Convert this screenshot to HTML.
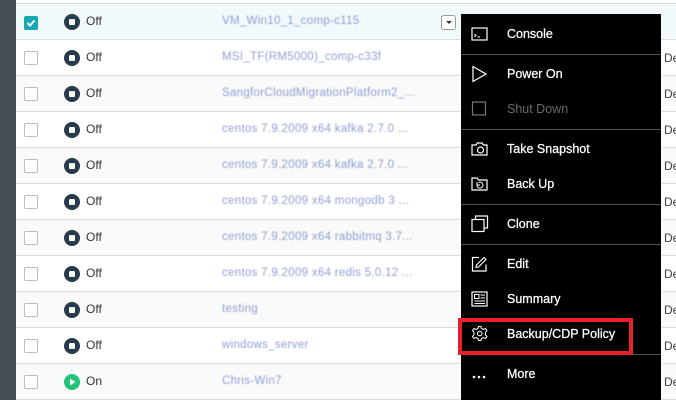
<!DOCTYPE html>
<html><head><meta charset="utf-8"><style>
*{margin:0;padding:0;box-sizing:border-box}
body{width:676px;height:400px;overflow:hidden;background:#fff;font-family:"Liberation Sans",sans-serif;position:relative}
.side{position:absolute;left:0;top:0;width:16px;height:400px;background:#464e56}
.top{position:absolute;left:16px;top:0;width:660px;height:4px;background:#fff;border-bottom:1px solid #ddd}
.row{position:absolute;left:16px;width:660px;height:36px;border-bottom:1px solid #dcdcdc;background:#fff}
.row.alt{background:#fafafa}
.row.sel{background:#f2f9fc}
.cb{position:absolute;left:8px;top:11px;width:14px;height:14px;border:1px solid #bdbdbd;border-radius:2px;background:#fff}
.cb.on{background:#16aab0;border-color:#16aab0}
.st{position:absolute;left:48px;top:10px;width:16px;height:16px;border-radius:50%;background:#263c48}
.st::after{content:"";position:absolute;left:5px;top:5px;width:6px;height:6px;background:#fff;border-radius:1px}
.st.g{background:#22c27a}
.st.g::after{display:none}
.lbl{position:absolute;left:70px;top:10px;font-size:12px;color:#333}
.nm{position:absolute;left:206px;top:11px;font-size:11.5px;color:#6b7fc4;opacity:.75;letter-spacing:.3px;filter:blur(.5px)}
.de{position:absolute;left:648px;top:11px;font-size:12px;color:#444}
.dd{position:absolute;left:441px;top:15px;width:15px;height:15px;border:1px solid #999;border-radius:3px;background:#fff}
.dd::after{content:"";position:absolute;left:4px;top:5px;border-left:3px solid transparent;border-right:3px solid transparent;border-top:3px solid #333}
.menu{position:absolute;left:461px;top:14px;width:200px;height:386px;background:#000}
.it{position:absolute;left:0;width:200px;height:35px;color:#fff;font-size:12.5px;-webkit-text-stroke:0.25px #fff}
.it span{position:absolute;left:46px;top:11px}
.it svg{position:absolute;left:10px;top:9px}
.dis{color:#6a6a6a;-webkit-text-stroke:0}
.sep{position:absolute;left:0;width:200px;height:1px;background:#4f5358}
.red{position:absolute;left:458px;top:318px;width:175px;height:37px;border:4px solid #e8202a}
</style></head><body>
<div class="side"></div>
<div class="top"></div>

<div class="row sel" style="top:5px;height:35px"><div class="cb on"><svg width="12" height="12" viewBox="0 0 12 12" style="position:absolute;left:0;top:0"><path d="M2.5 6 L5 8.5 L9.5 3.5" stroke="#fff" stroke-width="2" fill="none"/></svg></div><div class="st" style="top:9px"></div><div class="lbl" style="top:9px">Off</div><div class="nm" style="top:10px">VM_Win10_1_comp-c115</div></div>
<div class="row" style="top:40px"><div class="cb"></div><div class="st"></div><div class="lbl">Off</div><div class="nm">MSI_TF(RM5000)_comp-c33f</div><div class="de">De</div></div>
<div class="row alt" style="top:76px"><div class="cb"></div><div class="st"></div><div class="lbl">Off</div><div class="nm">SangforCloudMigrationPlatform2_...</div><div class="de">De</div></div>
<div class="row" style="top:112px"><div class="cb"></div><div class="st"></div><div class="lbl">Off</div><div class="nm">centos 7.9.2009 x64 kafka 2.7.0 ...</div><div class="de">De</div></div>
<div class="row alt" style="top:148px"><div class="cb"></div><div class="st"></div><div class="lbl">Off</div><div class="nm">centos 7.9.2009 x64 kafka 2.7.0 ...</div><div class="de">De</div></div>
<div class="row" style="top:184px"><div class="cb"></div><div class="st"></div><div class="lbl">Off</div><div class="nm">centos 7.9.2009 x64 mongodb 3 ...</div><div class="de">De</div></div>
<div class="row alt" style="top:220px"><div class="cb"></div><div class="st"></div><div class="lbl">Off</div><div class="nm">centos 7.9.2009 x64 rabbitmq 3.7...</div><div class="de">De</div></div>
<div class="row" style="top:256px"><div class="cb"></div><div class="st"></div><div class="lbl">Off</div><div class="nm">centos 7.9.2009 x64 redis 5.0.12 ...</div><div class="de">De</div></div>
<div class="row alt" style="top:292px"><div class="cb"></div><div class="st"></div><div class="lbl">Off</div><div class="nm">testing</div><div class="de">De</div></div>
<div class="row" style="top:328px"><div class="cb"></div><div class="st"></div><div class="lbl">Off</div><div class="nm">windows_server</div><div class="de">De</div></div>
<div class="row alt" style="top:364px"><div class="cb"></div><div class="st g"><svg width="16" height="16" viewBox="0 0 16 16"><path d="M6 4.5 L11.5 8 L6 11.5 Z" fill="#fff"/></svg></div><div class="lbl">On</div><div class="nm">Chris-Win7</div><div class="de">De</div></div>

<div class="dd"></div>

<div class="menu">
 <div class="it" style="top:2px"><svg width="18" height="18" viewBox="0 0 18 18"><rect x="1" y="3" width="15" height="12" stroke="#fff" fill="none" stroke-width="1.2"/><path d="M3.5 9 L5 10.5 L3.5 12 M6.5 12 H9" stroke="#fff" fill="none" stroke-width="1"/></svg><span>Console</span></div>
 <div class="sep" style="top:40px"></div>
 <div class="it" style="top:42px"><svg width="18" height="18" viewBox="0 0 18 18"><path d="M2 1.5 L15 9 L2 16.5 Z" stroke="#fff" fill="none" stroke-width="1.2"/></svg><span>Power On</span></div>
 <div class="it dis" style="top:77px"><svg width="18" height="18" viewBox="0 0 18 18"><rect x="1.5" y="2" width="13" height="13" stroke="#777" fill="none" stroke-width="1.2"/></svg><span>Shut Down</span></div>
 <div class="sep" style="top:115px"></div>
 <div class="it" style="top:117px"><svg width="18" height="18" viewBox="0 0 18 18"><path d="M1 5 H5 L6.5 3 H11 L12.5 5 H16 V15 H1 Z" stroke="#fff" fill="none" stroke-width="1.2"/><circle cx="9.5" cy="10" r="3" stroke="#fff" fill="none" stroke-width="1.2"/></svg><span>Take Snapshot</span></div>
 <div class="it" style="top:152px"><svg width="18" height="18" viewBox="0 0 18 18"><path d="M1 3 H6 L7.5 5 H16 V15 H1 Z" stroke="#fff" fill="none" stroke-width="1.2"/><path d="M6 10 A3 3 0 1 0 7.5 7.5 M6 7 V10 H9" stroke="#fff" fill="none" stroke-width="1"/></svg><span>Back Up</span></div>
 <div class="sep" style="top:190px"></div>
 <div class="it" style="top:192px"><svg width="18" height="18" viewBox="0 0 18 18"><rect x="4.5" y="1" width="12" height="12" stroke="#fff" fill="none" stroke-width="1.2"/><rect x="1" y="4.5" width="12" height="12" stroke="#fff" fill="#000" stroke-width="1.2"/></svg><span>Clone</span></div>
 <div class="sep" style="top:230px"></div>
 <div class="it" style="top:232px"><svg width="18" height="18" viewBox="0 0 18 18"><path d="M8 2.5 H1.5 V16 H15 V9.5" stroke="#fff" fill="none" stroke-width="1.2"/><path d="M5 12.5 L5.5 10 L13 2.5 L15 4.5 L7.5 12 Z" stroke="#fff" fill="none" stroke-width="1.1"/></svg><span>Edit</span></div>
 <div class="it" style="top:267px"><svg width="18" height="18" viewBox="0 0 18 18"><rect x="1" y="2" width="15" height="14" stroke="#fff" fill="none" stroke-width="1.2"/><rect x="3.5" y="4.5" width="4.5" height="4" stroke="#fff" fill="none" stroke-width="1"/><path d="M9.5 5 H14 M9.5 8 H14 M3.5 11 H14 M3.5 13.5 H14" stroke="#fff" stroke-width="1"/></svg><span>Summary</span></div>
 <div class="it" style="top:302px"><svg width="18" height="18" viewBox="0 0 18 18"><path d="M7.5 1.5 H10 L10.5 3.5 L12.5 4.5 L14.5 3.5 L16 5.5 L14.5 7.3 V9.7 L16 11.5 L14.5 13.5 L12.5 12.5 L10.5 13.5 L10 15.5 H7.5 L7 13.5 L5 12.5 L3 13.5 L1.5 11.5 L3 9.7 V7.3 L1.5 5.5 L3 3.5 L5 4.5 L7 3.5 Z" stroke="#fff" fill="none" stroke-width="1"/><circle cx="8.75" cy="8.5" r="2.3" stroke="#fff" fill="none" stroke-width="1"/></svg><span>Backup/CDP Policy</span></div>
 <div class="sep" style="top:340px"></div>
 <div class="it" style="top:342px"><svg width="18" height="18" viewBox="0 0 18 18"><circle cx="3" cy="12" r="1.3" fill="#fff"/><circle cx="8" cy="12" r="1.3" fill="#fff"/><circle cx="13" cy="12" r="1.3" fill="#fff"/></svg><span>More</span></div>
</div>
<div class="red"></div>
</body></html>
